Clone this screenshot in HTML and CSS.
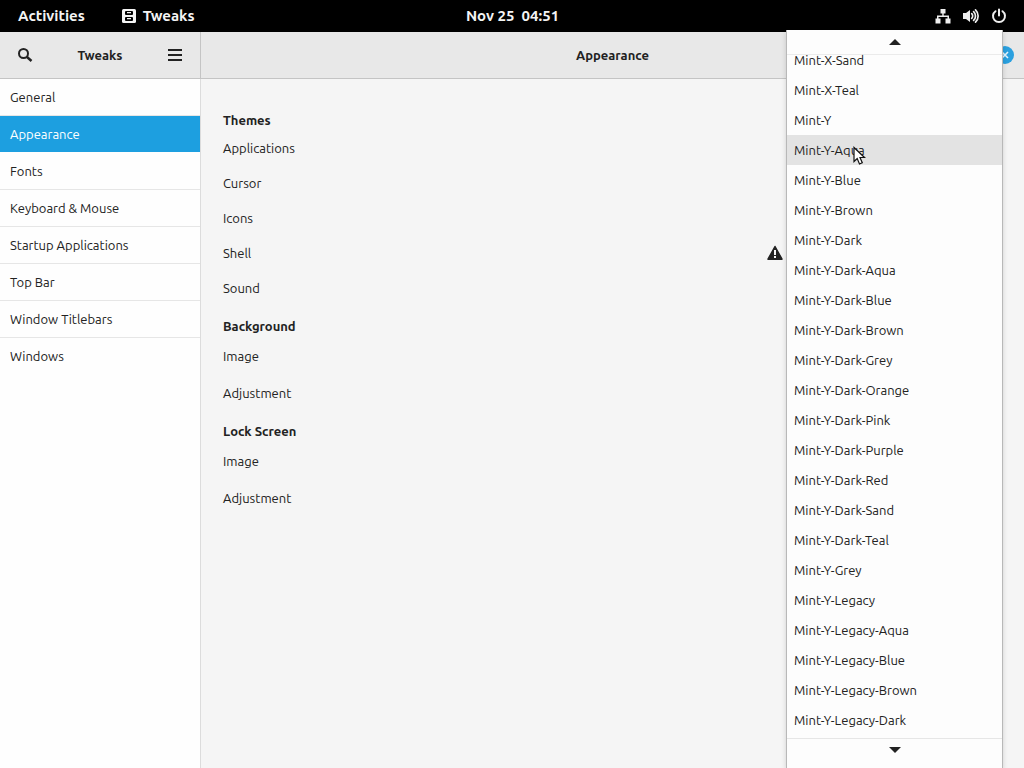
FILE: index.html
```html
<!DOCTYPE html>
<html lang="en">
<head>
<meta charset="utf-8">
<title>Tweaks</title>
<link rel="stylesheet" href="styles.css">
</head>
<body>
<header class="topbar">
  <div class="topbar-left">
    <button class="top-btn">Activities</button>
    <button class="top-btn app-btn">
      <svg width="14" height="14" viewBox="0 0 14 14" aria-hidden="true"><rect width="14" height="14" rx="1.500" fill="#f4f4f4"/><rect x="3" y="2" width="8" height="4" rx="1" fill="#000"/><rect x="3" y="8" width="8" height="4" rx="1" fill="#000"/><path fill="#f4f4f4" d="M5 3h4v1.300H5zM5 9h4v1.300H5z"/></svg>
      Tweaks
    </button>
  </div>
  <button class="top-btn clock">Nov 25&nbsp; 04:51</button>
  <div class="topbar-right">
    <svg width="16" height="16" viewBox="0 0 16 16" role="img" aria-label="Network"><path fill="#eee" d="M5.500 1h5v4.500H8.700V7.500H14V10.500h1.500v5h-5v-5H12.500V9h-9v1.500h2v5h-5v-5H2V7.500h5.300V5.500H5.500z"/></svg>
    <svg width="16" height="16" viewBox="0 0 16 16" role="img" aria-label="Volume"><path fill="#eee" d="M0 5h3L7 2v12l-4-3H0z"/><path fill="none" stroke="#eee" stroke-width="1.700" stroke-linecap="round" d="M8.700 5.700a3.200 3.200 0 0 1 0 4.600M10.600 3.600a6 6 0 0 1 0 8.800M12.500 1.800a8.600 8.600 0 0 1 0 12.400"/></svg>
    <svg width="16" height="16" viewBox="0 0 16 16" role="img" aria-label="Power"><path fill="none" stroke="#eee" stroke-width="2" stroke-linecap="round" d="M8 1.500v6M4.500 3.200a6 6 0 1 0 7 0"/></svg>
  </div>
</header>
<div class="window">
  <aside class="sidebar">
    <div class="headerbar side-head">
      <button class="icon-btn" aria-label="Search"><svg width="16" height="16" viewBox="0 0 16 16"><circle cx="6.500" cy="6.500" r="4.500" fill="none" stroke="#222" stroke-width="2"/><path d="M10 10l4.500 4" stroke="#222" stroke-width="2.500"/></svg></button>
      <h1 class="title">Tweaks</h1>
      <button class="icon-btn" aria-label="Menu"><svg width="16" height="16" viewBox="0 0 16 16"><path d="M1 3h14M1 8h14M1 13h14" stroke="#222" stroke-width="2"/></svg></button>
    </div>
    <nav class="nav">
      <a class="nav-item" href="#general">General</a>
      <a class="nav-item active" href="#appearance">Appearance</a>
      <a class="nav-item" href="#fonts">Fonts</a>
      <a class="nav-item" href="#keyboard">Keyboard &amp; Mouse</a>
      <a class="nav-item" href="#startup">Startup Applications</a>
      <a class="nav-item" href="#topbar">Top Bar</a>
      <a class="nav-item" href="#titlebars">Window Titlebars</a>
      <a class="nav-item" href="#windows">Windows</a>
    </nav>
  </aside>
  <main class="main">
    <div class="headerbar main-head">
      <h2 class="title">Appearance</h2>
      <button class="close" aria-label="Close"><svg width="8" height="8" viewBox="0 0 8 8"><path d="M1 1l6 6M7 1L1 7" stroke="#e4f4fd" stroke-width="1.600"/></svg></button>
    </div>
    <div class="content">
      <section class="group">
        <h3 class="group-title">Themes</h3>
        <div class="row">Applications</div>
        <div class="row">Cursor</div>
        <div class="row">Icons</div>
        <div class="row">Shell
          <svg class="warning" width="16" height="16" viewBox="0 0 16 16" role="img" aria-label="Warning"><path fill="#222" stroke="#222" stroke-width="1.500" stroke-linejoin="round" d="M8 1.500L15 14.200H1z"/><path fill="#f6f6f6" d="M7 5h2v5H7zM7 11h2v2H7z"/></svg>
        </div>
        <div class="row">Sound</div>
      </section>
      <section class="group tall">
        <h3 class="group-title">Background</h3>
        <div class="row">Image</div>
        <div class="row">Adjustment</div>
      </section>
      <section class="group tall">
        <h3 class="group-title">Lock Screen</h3>
        <div class="row">Image</div>
        <div class="row">Adjustment</div>
      </section>
    </div>
  </main>
</div>
<div class="menu">
  <button class="scroller up" aria-label="Scroll up"><svg width="12" height="6" viewBox="0 0 12 6"><path d="M0 6l6-6 6 6z" fill="#222"/></svg></button>
  <div class="menu-list" role="menu">
    <button class="menu-item" role="menuitem">Mint-X-Sand</button>
    <button class="menu-item" role="menuitem">Mint-X-Teal</button>
    <button class="menu-item" role="menuitem">Mint-Y</button>
    <button class="menu-item hover" role="menuitem">Mint-Y-Aqua</button>
    <button class="menu-item" role="menuitem">Mint-Y-Blue</button>
    <button class="menu-item" role="menuitem">Mint-Y-Brown</button>
    <button class="menu-item" role="menuitem">Mint-Y-Dark</button>
    <button class="menu-item" role="menuitem">Mint-Y-Dark-Aqua</button>
    <button class="menu-item" role="menuitem">Mint-Y-Dark-Blue</button>
    <button class="menu-item" role="menuitem">Mint-Y-Dark-Brown</button>
    <button class="menu-item" role="menuitem">Mint-Y-Dark-Grey</button>
    <button class="menu-item" role="menuitem">Mint-Y-Dark-Orange</button>
    <button class="menu-item" role="menuitem">Mint-Y-Dark-Pink</button>
    <button class="menu-item" role="menuitem">Mint-Y-Dark-Purple</button>
    <button class="menu-item" role="menuitem">Mint-Y-Dark-Red</button>
    <button class="menu-item" role="menuitem">Mint-Y-Dark-Sand</button>
    <button class="menu-item" role="menuitem">Mint-Y-Dark-Teal</button>
    <button class="menu-item" role="menuitem">Mint-Y-Grey</button>
    <button class="menu-item" role="menuitem">Mint-Y-Legacy</button>
    <button class="menu-item" role="menuitem">Mint-Y-Legacy-Aqua</button>
    <button class="menu-item" role="menuitem">Mint-Y-Legacy-Blue</button>
    <button class="menu-item" role="menuitem">Mint-Y-Legacy-Brown</button>
    <button class="menu-item" role="menuitem">Mint-Y-Legacy-Dark</button>
  </div>
  <button class="scroller down" aria-label="Scroll down"><svg width="12" height="6" viewBox="0 0 12 6"><path d="M0 0h12L6 6z" fill="#222"/></svg></button>
  <svg class="pointer" width="13" height="20" viewBox="0 0 13 20" aria-hidden="true"><path d="M1 1.500v14l3.200-3 2.300 5.500 2.800-1.200L7 11.500h4.500z" fill="#fff" stroke="#111" stroke-width="1.200"/></svg>
</div>
</body>
</html>
```
FILE: styles.css
```css
* { box-sizing: border-box; }

body {
  margin: 0;
  min-height: 100vh;
  display: flex;
  flex-direction: column;
  position: relative;
  overflow: hidden;
  background: #f5f5f5;
  color: #222;
  font: 13px/20px Ubuntu, "Noto Sans", sans-serif;
}

button {
  border: 0;
  padding: 0;
  background: none;
  color: inherit;
  font: inherit;
}

h1, h2, h3 { margin: 0; font-size: 13px; font-weight: 700; }

svg { display: block; flex: none; }

.topbar {
  display: grid;
  grid-template-columns: 1fr auto 1fr;
  align-items: center;
  height: 32px;
  padding: 0 17px 0 18px;
  background: #000;
  color: #f4f4f4;
  font-size: 15px;
  font-weight: 700;
}

.topbar-left { display: flex; gap: 37px; }
.app-btn { display: flex; align-items: center; gap: 7px; }
.topbar-right { display: flex; justify-content: flex-end; gap: 12px; }

.window { flex: 1; display: flex; }

.sidebar {
  width: 201px;
  background: #fefefe;
  border-right: 1px solid #dcdcdc;
}

.main { flex: 1; }

.headerbar {
  display: grid;
  align-items: center;
  height: 47px;
  background: #e8e8e8;
  border-bottom: 1px solid #c4c4c4;
}

.side-head {
  grid-template-columns: 16px 1fr 16px;
  padding: 0 17px;
  box-shadow: 1px 0 #c4c4c4;
}

.main-head { grid-template-columns: 1fr; position: relative; }
.title { text-align: center; }

.close {
  position: absolute;
  right: 10px;
  top: 14px;
  display: grid;
  place-items: center;
  width: 18px;
  height: 18px;
  border-radius: 50%;
  background: #2ba0df;
}

.nav-item {
  display: block;
  height: 37px;
  padding: 8px 10px;
  border-bottom: 1px solid #e6e6e6;
  color: inherit;
  text-decoration: none;
}

.nav-item:last-child { border-bottom: 0; }
.nav-item.active { background: #1d9fe0; border-color: #fefefe; color: #fff; }

.content { padding: 30px 22px; }
.group { margin-bottom: 10px; }
.group-title { height: 21px; line-height: 22px; }

.row {
  display: flex;
  align-items: center;
  justify-content: space-between;
  height: 35px;
}

.tall { margin-bottom: 9px; }
.tall .group-title { height: 22px; }
.tall .row { height: 37px; }
.warning { margin-right: 219px; }

.menu {
  position: absolute;
  top: 30px;
  right: 21px;
  bottom: 0;
  display: flex;
  flex-direction: column;
  width: 217px;
  background: #fdfdfd;
  border: 1px solid #b8b8b8;
  border-width: 0 1px;
  box-shadow: 0 2px 5px rgba(0, 0, 0, 0.15);
}

.scroller { display: flex; justify-content: center; }
.up { height: 25px; padding-top: 9px; border-bottom: 1px solid #ebebeb; }
.down { height: 30px; padding-top: 8px; border-top: 1px solid #e6e6e6; }

.menu-list {
  flex: 1;
  display: flex;
  flex-direction: column;
  margin-top: -10px;
}

.menu-item {
  flex: none;
  height: 30px;
  padding: 0 7px;
  text-align: left;
}

.hover { background: #e3e3e3; }

.pointer { position: absolute; left: 66px; top: 116px; }
```
